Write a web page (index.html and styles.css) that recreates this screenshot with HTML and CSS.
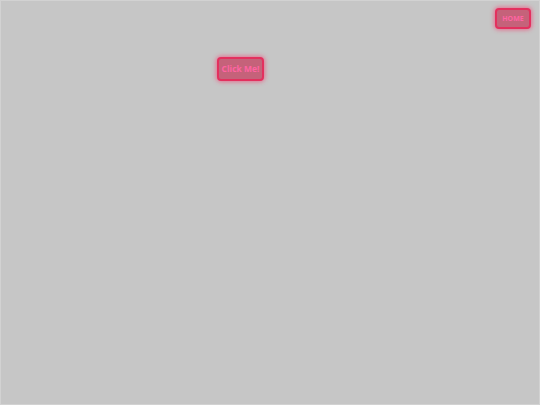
FILE: index.html
```html
<!DOCTYPE html>
<html>
<head>
<meta charset="utf-8">
<link rel="stylesheet" href="styles.css">
</head>
<body>
<header class="top">
  <button class="btn btn-home">HOME</button>
</header>
<main class="stage">
  <button class="btn btn-click">Click Me!</button>
</main>
</body>
</html>
```
FILE: styles.css
```css
html, body {
  margin: 0;
  height: 100%;
}
body {
  background: #c6c6c6;
  font-family: "Open Sans", "DejaVu Sans", sans-serif;
  box-sizing: border-box;
  border: 1px solid #d2d2d2;
}
.top {
  display: flex;
  justify-content: flex-end;
  padding: 7px 8px 0 0;
}
.stage {
  display: flex;
  padding: 28px 0 0 216px;
}
.btn {
  box-sizing: border-box;
  display: block;
  margin: 0;
  padding: 0;
  background: #c5627a;
  border: 2px solid #e3305e;
  border-radius: 4px;
  color: #ff64a2;
  font-family: "Open Sans", "DejaVu Sans", sans-serif;
  font-weight: 700;
  white-space: nowrap;
  text-align: center;
  box-shadow: 0 0 4px 1px rgba(255, 40, 100, 0.55);
}
.btn-home {
  width: 36px;
  height: 21px;
  font-size: 7px;
  line-height: 17px;
}
.btn-click {
  width: 47px;
  height: 24px;
  font-size: 8.5px;
  line-height: 20px;
}
```
